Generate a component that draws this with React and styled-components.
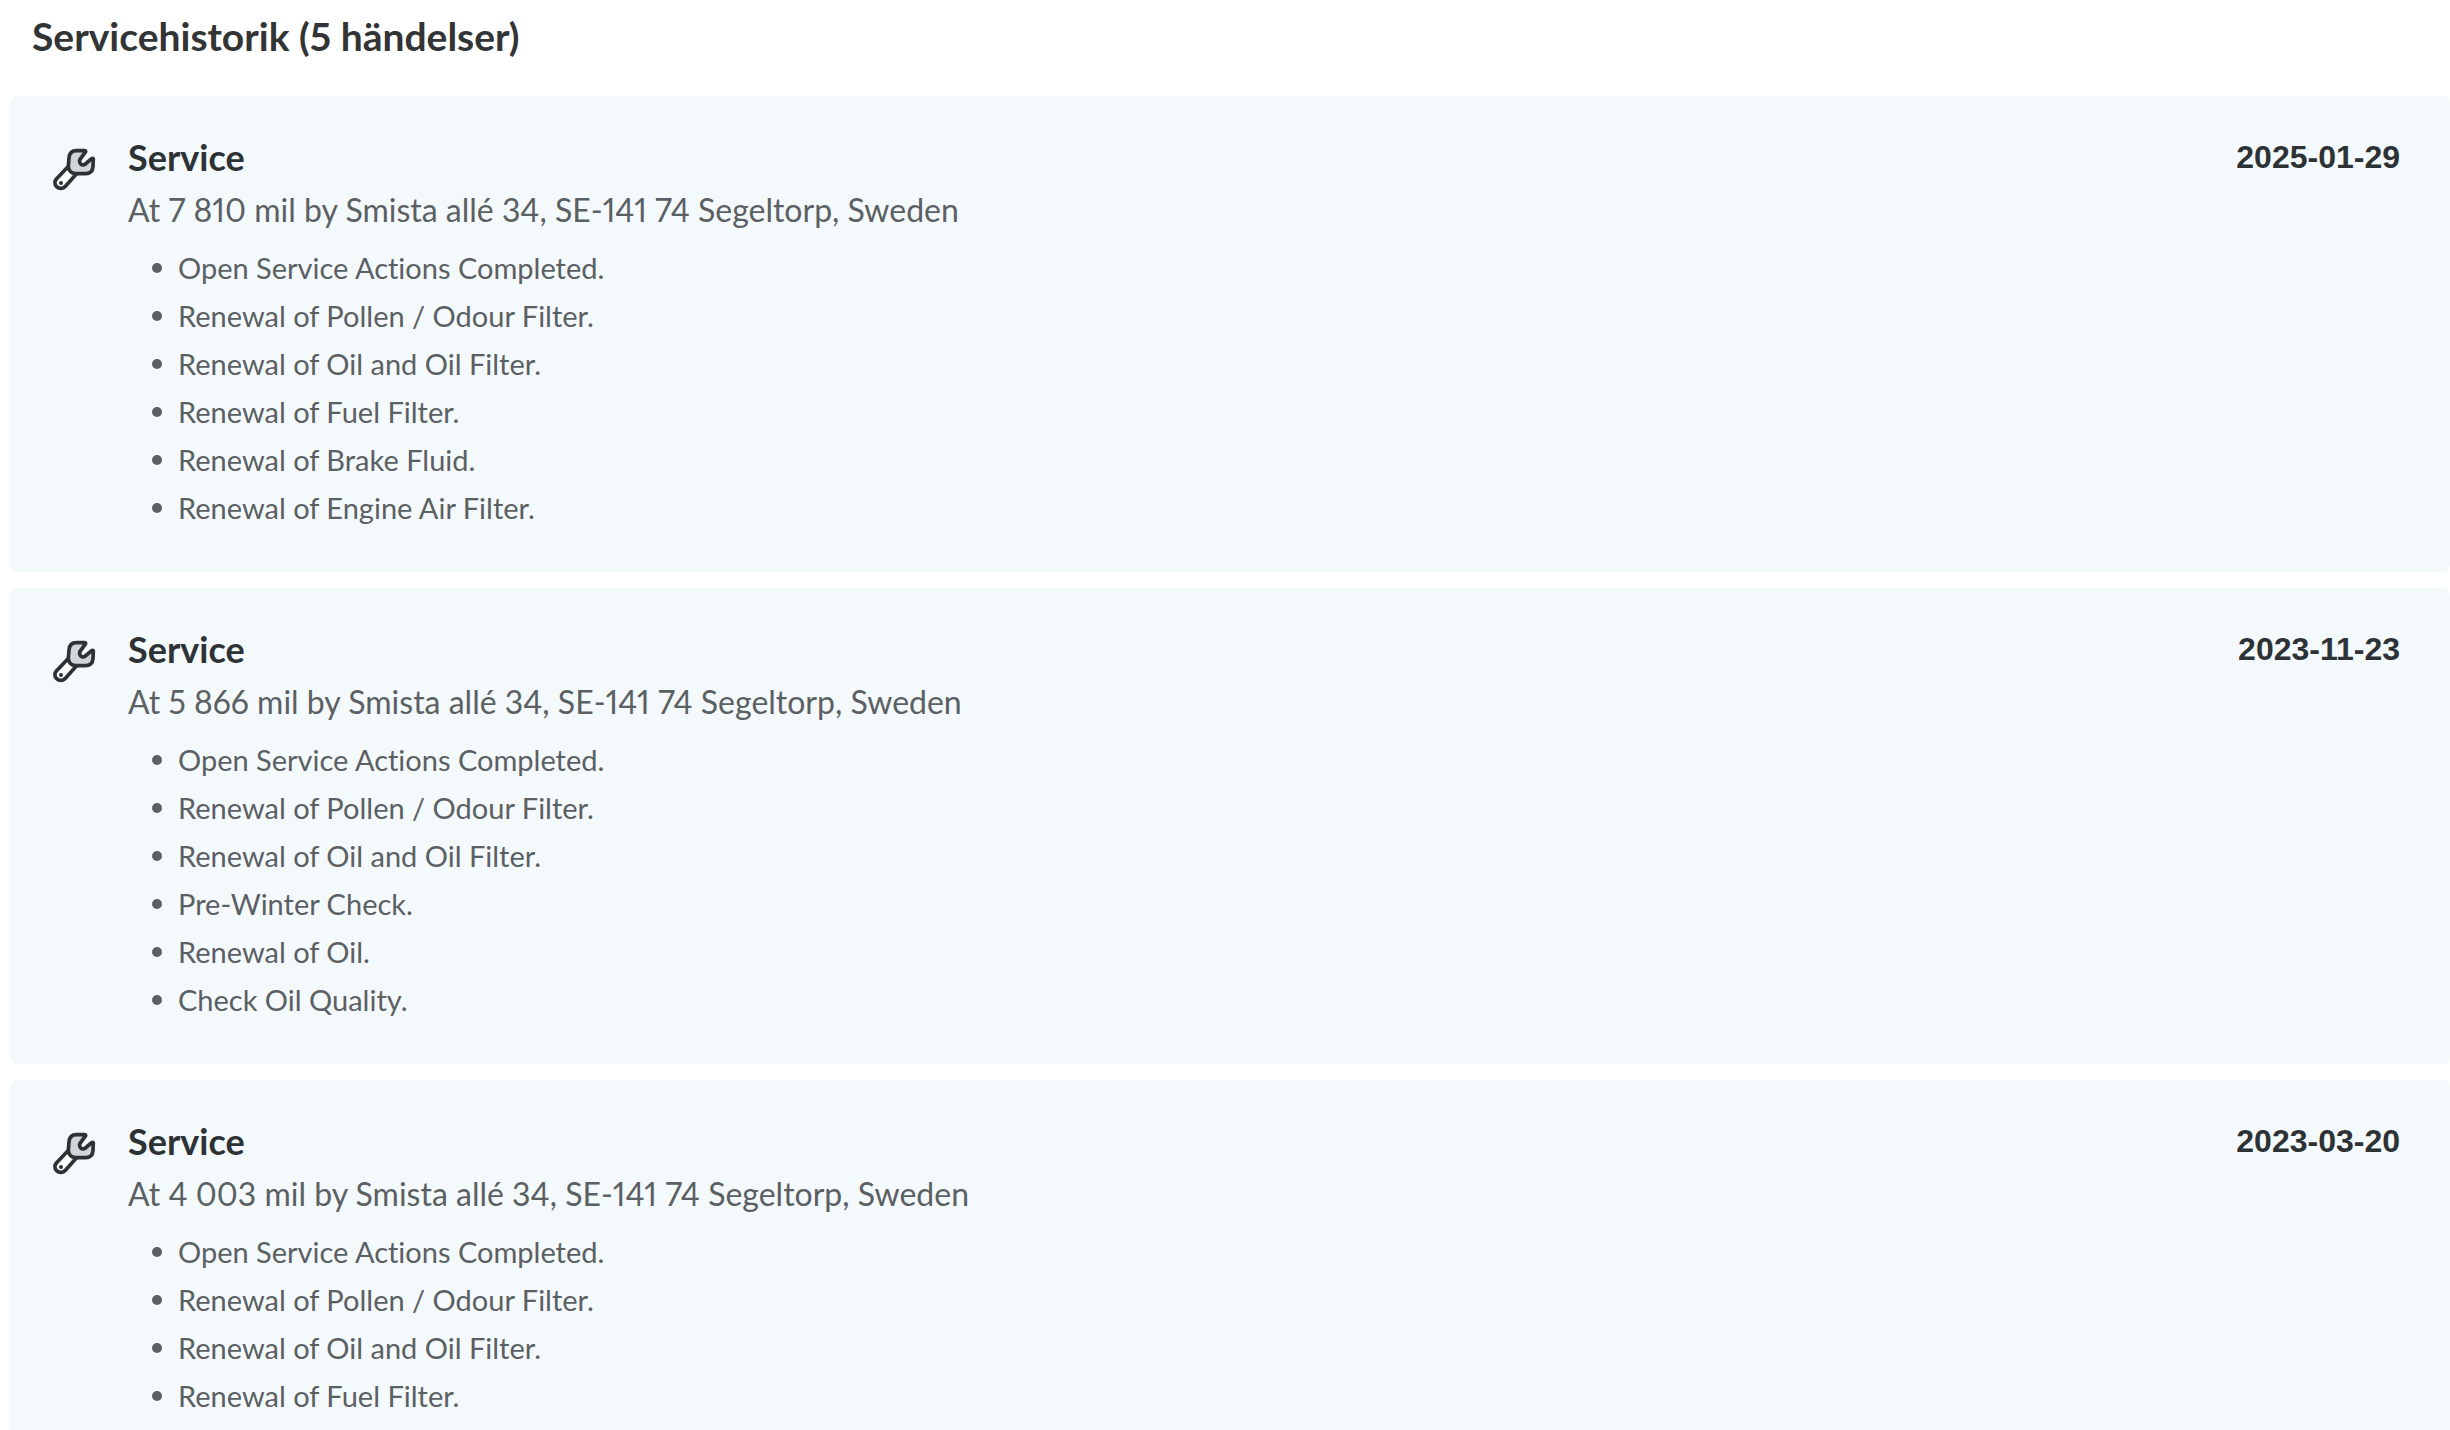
import styled, { createGlobalStyle } from 'styled-components';

const GlobalStyle = createGlobalStyle`
  body {
    margin: 0;
    background-color: #ffffff;
    font-family: Lato, 'Open Sans', sans-serif;
    font-variant-ligatures: none;
    font-variant-numeric: proportional-nums;
  }
`;

const History = styled.main`
  display: flex;
  flex-direction: column;
`;

const Heading = styled.h2`
  margin: 0;
  padding: 8px 32px 32px;
  font-size: 39px;
  line-height: 56px;
  font-weight: 700;
  color: #323435;
`;

const EventList = styled.div`
  display: flex;
  flex-direction: column;
  gap: 16px;
  padding-left: 10px;
`;

const EventCard = styled.article`
  display: flex;
  align-items: flex-start;
  gap: 30px;
  padding: 40px 50px 40px 40px;
  border-radius: 8px;
  background-color: #f4f9fc;
`;

const IconBox = styled.div`
  display: flex;
  flex-shrink: 0;
  margin-top: 10px;
`;

const EventBody = styled.div`
  flex: 1;
`;

const EventHeader = styled.div`
  display: flex;
  justify-content: space-between;
  margin-bottom: 6px;
  line-height: 42px;
  font-size: 32px;
  color: #2d3234;
`;

const EventTitle = styled.h3`
  margin: 0;
  font-size: 36px;
  font-weight: 700;
`;

const EventDate = styled.time`
  font-family: 'Liberation Sans', Arial, sans-serif;
  font-weight: 700;
`;

const Place = styled.p`
  margin: 0 0 8px;
  font-size: 32px;
  line-height: 52px;
  color: #5b6063;
`;

const Actions = styled.ul`
  margin: 0;
  padding: 0 0 0 24px;
  list-style: none;
`;

const Action = styled.li`
  display: flex;
  align-items: center;
  gap: 16px;
  font-size: 29px;
  line-height: 48px;
  color: #5b6063;

  &::before {
    content: '';
    width: 10px;
    height: 10px;
    border-radius: 50%;
    background-color: #5b6063;
  }
`;

const events = [
  {
    date: '2025-01-29',
    mileage: '7 810',
    actions: [
      'Open Service Actions Completed.',
      'Renewal of Pollen / Odour Filter.',
      'Renewal of Oil and Oil Filter.',
      'Renewal of Fuel Filter.',
      'Renewal of Brake Fluid.',
      'Renewal of Engine Air Filter.',
    ],
  },
  {
    date: '2023-11-23',
    mileage: '5 866',
    actions: [
      'Open Service Actions Completed.',
      'Renewal of Pollen / Odour Filter.',
      'Renewal of Oil and Oil Filter.',
      'Pre-Winter Check.',
      'Renewal of Oil.',
      'Check Oil Quality.',
    ],
  },
  {
    date: '2023-03-20',
    mileage: '4 003',
    actions: [
      'Open Service Actions Completed.',
      'Renewal of Pollen / Odour Filter.',
      'Renewal of Oil and Oil Filter.',
      'Renewal of Fuel Filter.',
    ],
  },
];

function WrenchIcon() {
  return (
    <svg width="48" height="48" viewBox="30 48 144 144" aria-hidden="true">
      <g stroke="#2d3234" strokeWidth="11" strokeLinejoin="round" strokeLinecap="round">
        <path
          fill="#ffffff"
          d="M84 110 L50 146 C43 153 43 164 50 170 C57 177 68 177 75 170 L109 132 Z"
        />
        <path
          fill="#d3d6d8"
          d="M137 65 Q137 62 133 62 L110 62 C95 62 88 69 87 84 L85 108 C85 122 94 130 107 131 L136 131 C151 131 158 124 159 110 L160 87 Q159 83 155 86 L136 102 C130 107 123 105 120 99 C117 93 119 88 124 83 Z"
        />
      </g>
      <circle cx="63" cy="159" r="6" fill="#2d3234" />
    </svg>
  );
}

function ServiceEvent({ event }) {
  return (
    <EventCard>
      <IconBox>
        <WrenchIcon />
      </IconBox>
      <EventBody>
        <EventHeader>
          <EventTitle>Service</EventTitle>
          <EventDate dateTime={event.date}>{event.date}</EventDate>
        </EventHeader>
        <Place>At {event.mileage} mil by Smista allé 34, SE-141 74 Segeltorp, Sweden</Place>
        <Actions>
          {event.actions.map((action) => (
            <Action key={action}>{action}</Action>
          ))}
        </Actions>
      </EventBody>
    </EventCard>
  );
}

function App() {
  return (
    <>
      <GlobalStyle />
      <History>
        <Heading>Servicehistorik (5 händelser)</Heading>
        <EventList>
          {events.map((event) => (
            <ServiceEvent key={event.date} event={event} />
          ))}
        </EventList>
      </History>
    </>
  );
}

export default App;
